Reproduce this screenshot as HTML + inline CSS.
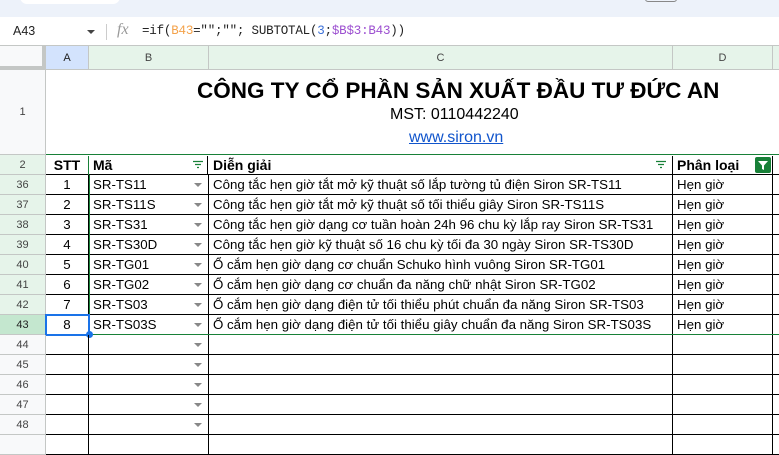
<!DOCTYPE html>
<html><head><meta charset="utf-8"><style>
*{margin:0;padding:0;box-sizing:border-box}
body{width:779px;height:438px;overflow:hidden;background:#fff;font-family:"Liberation Sans",Arial,sans-serif;position:relative;color:#000}
.a{position:absolute}
.rh{position:absolute;left:0;width:46px;height:20px;background:#f8f9fa;color:#444;font-size:11px;text-align:center;line-height:20px;border-bottom:1px solid #c4c7c5;border-right:1px solid #c4c7c5}
.g{background:#e6f4ea}
.ch{position:absolute;top:46px;height:24px;background:#e6f4ea;border-right:1px solid #c4c7c5;border-bottom:1px solid #c4c7c5;font-size:11px;color:#444;text-align:center;line-height:24px}
.row{position:absolute;left:46px;width:733px;height:20px;border-bottom:1px solid #000;font-size:13.3px;line-height:19px}
.row div{position:absolute;top:0;height:19px;white-space:nowrap;overflow:hidden}
.ca{left:0;width:43px;text-align:center;border-right:1px solid #000}
.cb{left:43px;width:120px;padding-left:4px;border-right:1px solid #000}
.cc{left:163px;width:464px;padding-left:4px;border-right:1px solid #000}
.cd{left:627px;width:100px;padding-left:4px;border-right:1px solid #000}
.dd{position:absolute;left:148px;width:0;height:0;border-left:4px solid transparent;border-right:4px solid transparent;border-top:4px solid #888;z-index:2}
</style></head><body>
<div class="a" style="left:0;top:0;width:779px;height:17px;background:#edf2fa"></div>
<div class="a" style="left:20px;top:-10px;width:100px;height:14px;background:#fff;border-radius:8px"></div>
<div class="a" style="left:645px;top:-6px;width:32px;height:8px;border:1px solid #888;border-radius:3px"></div>
<div class="a" style="left:13px;top:24px;font-size:12.5px;color:#222">A43</div>
<div class="a" style="left:87px;top:30px;border-left:4px solid transparent;border-right:4px solid transparent;border-top:4px solid #444"></div>
<div class="a" style="left:106px;top:24px;width:1px;height:16px;background:#ccc"></div>
<div class="a" style="left:117px;top:21px;font-size:16px;font-style:italic;color:#999;font-family:'Liberation Serif',serif">fx</div>
<div class="a" style="left:142px;top:24px;font-size:12.5px;font-family:'Liberation Mono',monospace;color:#222;letter-spacing:-0.2px">=if(<span style="color:#f4a24a">B43</span>="";""; SUBTOTAL(<span style="color:#3a6fd8">3</span>;<span style="color:#9c4fd0">$B$3:B43</span>))</div>
<div class="a" style="left:0;top:45px;width:779px;height:1px;background:#c4c7c5"></div>
<div class="a" style="left:0;top:46px;width:46px;height:24px;background:#f8f9fa;border-right:4px solid #c4c7c5;border-bottom:4px solid #c4c7c5"></div>
<div class="ch" style="left:46px;width:43px;background:#d3e3fd;color:#222">A</div>
<div class="ch" style="left:89px;width:120px">B</div>
<div class="ch" style="left:209px;width:464px">C</div>
<div class="ch" style="left:673px;width:100px">D</div>
<div class="ch" style="left:773px;width:10px"></div>
<div class="rh" style="top:70px;height:85px;line-height:85px">1</div>
<div class="a" style="left:197px;top:78px;font-size:22.5px;font-weight:bold;white-space:nowrap">CÔNG TY CỔ PHẦN SẢN XUẤT ĐẦU TƯ ĐỨC AN</div>
<div class="a" style="left:390px;top:106px;font-size:16px;white-space:nowrap">MST: 0110442240</div>
<div class="a" style="left:409px;top:129px;font-size:16px;color:#1155cc;text-decoration:underline;white-space:nowrap">www.siron.vn</div>
<div class="rh g" style="top:155px">2</div>
<div class="row" style="font-weight:bold;font-size:14px;border-top:1px solid #188038;top:154px;height:21px">
<div class="ca" style="top:1px">STT</div><div class="cb" style="top:1px;border-left:1px solid #188038;left:42px">Mã</div><div class="cc" style="top:1px">Diễn giải</div><div class="cd" style="top:1px">Phân loại</div>
</div>
<svg class="a" style="left:192px;top:160px" width="12" height="9"><path d="M1 1.5h10M3 4.5h6M5 7.5h2" stroke="#188038" stroke-width="1.2"/></svg>
<svg class="a" style="left:655px;top:160px" width="12" height="9"><path d="M1 1.5h10M3 4.5h6M5 7.5h2" stroke="#188038" stroke-width="1.2"/></svg>
<div class="a" style="left:755px;top:157px;width:16px;height:16px;background:#188038;border-radius:2px"></div>
<svg class="a" style="left:755px;top:157px" width="16" height="16"><path d="M3 4h10l-4 4.5v4.5l-2-1v-3.5z" fill="#fff"/></svg>

<div class="rh g" style="top:175px">36</div>
<div class="row" style="top:175px"><div class="ca">1</div><div class="cb">SR-TS11</div><div class="cc">Công tắc hẹn giờ tắt mở kỹ thuật số lắp tường tủ điện Siron SR-TS11</div><div class="cd">Hẹn giờ</div><span class="dd" style="top:8px"></span></div>
<div class="rh g" style="top:195px">37</div>
<div class="row" style="top:195px"><div class="ca">2</div><div class="cb">SR-TS11S</div><div class="cc">Công tắc hẹn giờ tắt mở kỹ thuật số tối thiểu giây Siron SR-TS11S</div><div class="cd">Hẹn giờ</div><span class="dd" style="top:8px"></span></div>
<div class="rh g" style="top:215px">38</div>
<div class="row" style="top:215px"><div class="ca">3</div><div class="cb">SR-TS31</div><div class="cc">Công tắc hẹn giờ dạng cơ tuần hoàn 24h 96 chu kỳ lắp ray Siron SR-TS31</div><div class="cd">Hẹn giờ</div><span class="dd" style="top:8px"></span></div>
<div class="rh g" style="top:235px">39</div>
<div class="row" style="top:235px"><div class="ca">4</div><div class="cb">SR-TS30D</div><div class="cc">Công tắc hẹn giờ kỹ thuật số 16 chu kỳ tối đa 30 ngày Siron SR-TS30D</div><div class="cd">Hẹn giờ</div><span class="dd" style="top:8px"></span></div>
<div class="rh g" style="top:255px">40</div>
<div class="row" style="top:255px"><div class="ca">5</div><div class="cb">SR-TG01</div><div class="cc">Ổ cắm hẹn giờ dạng cơ chuẩn Schuko hình vuông Siron SR-TG01</div><div class="cd">Hẹn giờ</div><span class="dd" style="top:8px"></span></div>
<div class="rh g" style="top:275px">41</div>
<div class="row" style="top:275px"><div class="ca">6</div><div class="cb">SR-TG02</div><div class="cc">Ổ cắm hẹn giờ dạng cơ chuẩn đa năng chữ nhật Siron SR-TG02</div><div class="cd">Hẹn giờ</div><span class="dd" style="top:8px"></span></div>
<div class="rh g" style="top:295px">42</div>
<div class="row" style="top:295px"><div class="ca">7</div><div class="cb">SR-TS03</div><div class="cc">Ổ cắm hẹn giờ dạng điện tử tối thiểu phút chuẩn đa năng Siron SR-TS03</div><div class="cd">Hẹn giờ</div><span class="dd" style="top:8px"></span></div>
<div class="rh" style="top:315px;background:#c4e7cf;color:#222">43</div>
<div class="row" style="top:315px;border-bottom:1px solid #188038"><div class="ca">8</div><div class="cb">SR-TS03S</div><div class="cc">Ổ cắm hẹn giờ dạng điện tử tối thiểu giây chuẩn đa năng Siron SR-TS03S</div><div class="cd">Hẹn giờ</div><span class="dd" style="top:8px"></span></div>
<div class="a" style="left:89px;top:175px;width:1px;height:160px;background:#188038"></div>
<div class="a" style="left:45px;top:314px;width:45px;height:22px;border:2px solid #1a73e8"></div>
<div class="a" style="left:86px;top:331px;width:7px;height:7px;border-radius:50%;background:#1a73e8"></div>

<div class="rh" style="top:335px">44</div>
<div class="row" style="top:335px"><div class="ca"></div><div class="cb"></div><div class="cc"></div><div class="cd"></div><span class="dd" style="top:8px"></span></div>
<div class="rh" style="top:355px">45</div>
<div class="row" style="top:355px"><div class="ca"></div><div class="cb"></div><div class="cc"></div><div class="cd"></div><span class="dd" style="top:8px"></span></div>
<div class="rh" style="top:375px">46</div>
<div class="row" style="top:375px"><div class="ca"></div><div class="cb"></div><div class="cc"></div><div class="cd"></div><span class="dd" style="top:8px"></span></div>
<div class="rh" style="top:395px">47</div>
<div class="row" style="top:395px"><div class="ca"></div><div class="cb"></div><div class="cc"></div><div class="cd"></div><span class="dd" style="top:8px"></span></div>
<div class="rh" style="top:415px">48</div>
<div class="row" style="top:415px"><div class="ca"></div><div class="cb"></div><div class="cc"></div><div class="cd"></div><span class="dd" style="top:8px"></span></div>
<div class="rh" style="top:435px"></div>
<div class="row" style="top:435px"><div class="ca"></div><div class="cb"></div><div class="cc"></div><div class="cd"></div></div>
</body></html>
